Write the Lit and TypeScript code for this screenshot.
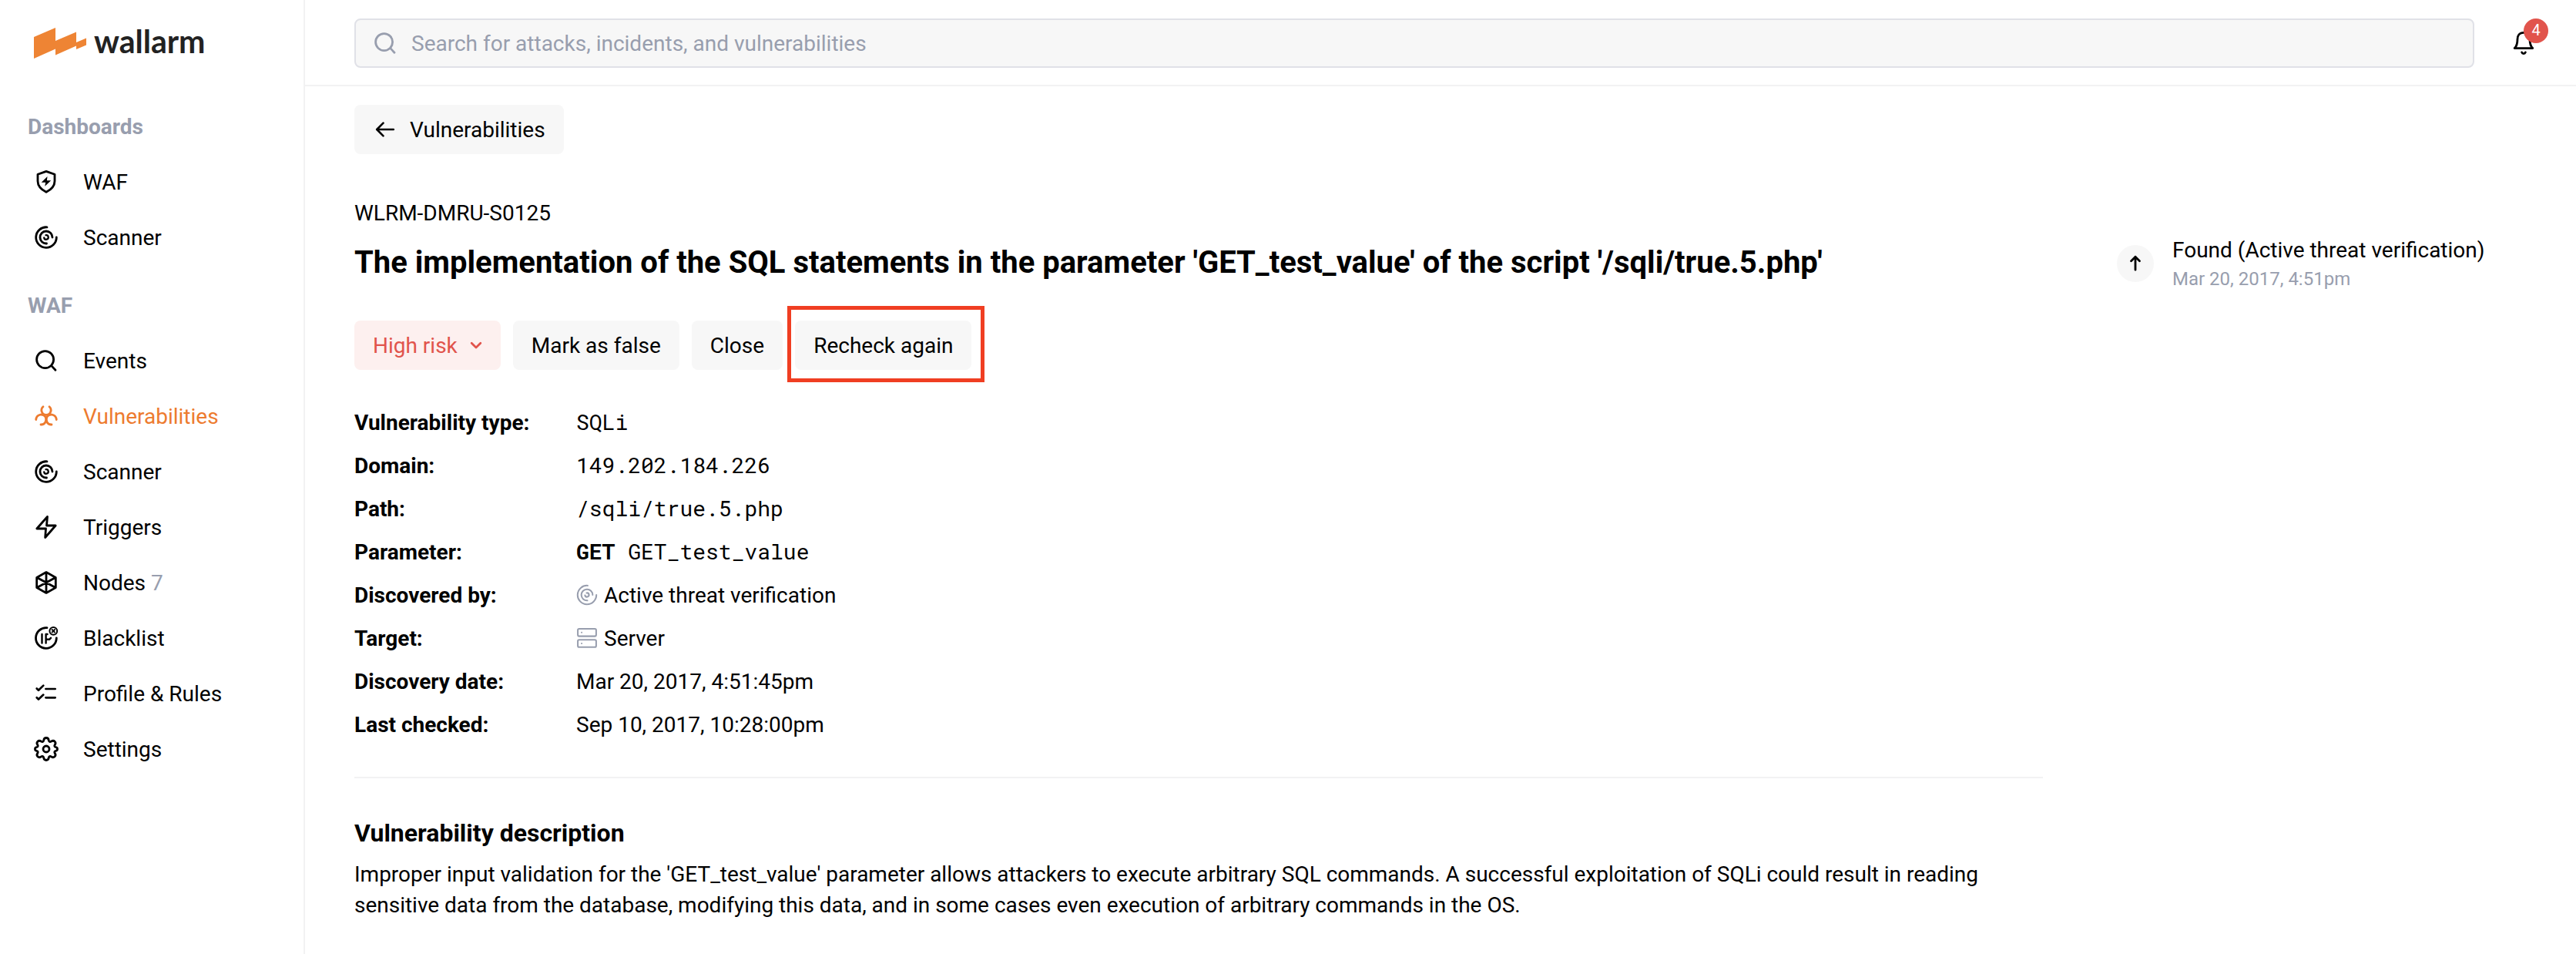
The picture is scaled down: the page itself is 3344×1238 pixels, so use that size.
import { LitElement, html, svg, css } from "lit";
import { customElement, property } from "lit/decorators.js";

const icons: Record<string, any> = {
  shield: svg`<path d="M24 10.400 35 14.200V23C35 29.800 30.500 34 24 37.300 17.500 34 13 29.800 13 23V14.200Z"/><path d="M25.500 17 17.700 24.800H23.200L22.200 29.800 30.200 22.200H24.900Z" fill="currentColor" stroke="none"/>`,
  scanner: svg`<path d="M25 10.800A13.300 13.300 0 1 0 37.300 24"/><path d="M24.500 32A8 8 0 1 1 32 24"/><path d="M23.500 21.200A2.800 2.800 0 1 1 21.200 24.500" stroke-width="2.300"/>`,
  search: svg`<circle cx="22.600" cy="22.600" r="11"/><path d="M31 30.900 36 36.200"/>`,
  bio: svg`<path d="M20 11.800C16 15.300 18 22.300 24 22.300S32 15.300 28 11.800"/><path d="M10.700 28.500C11.400 21.500 19.500 20 23 25 25.500 29.500 22.500 35.300 17 35"/><path d="M37.300 28.500C36.600 21.500 28.500 20 25 25 22.500 29.500 25.500 35.300 31 35"/>`,
  bolt: svg`<path d="M25.500 10.500 11.800 26H23.500L22.700 37.500 36.200 22H24.500Z"/>`,
  nodes: svg`<path d="M24 10.600 36.300 17.400V30.600L24 37.400 11.700 30.600V17.400ZM24 10.800V37.200M12 17.400 36 30.600M36 17.400 12 30.600"/>`,
  settings: svg`<circle cx="24" cy="24" r="4"/><path d="M24 9.500c2.200 0 3 1.200 3.300 3.200.3 1.700 1.700 2.300 3.200 1.400 1.700-1.200 3.200-1.300 4.600.1s1.200 2.900.1 4.400c-.9 1.400-.4 2.800 1.300 3.100 2 .3 2 1.200 2 2.300s0 2-2 2.300c-1.700.3-2.200 1.700-1.300 3.100 1.100 1.500 1.300 3-.1 4.400s-2.900 1.300-4.600.1c-1.500-.9-2.900-.3-3.200 1.400-.3 2-1.100 3.200-3.300 3.200s-3-1.200-3.300-3.200c-.3-1.700-1.700-2.300-3.200-1.400-1.700 1.200-3.200 1.300-4.600-.1s-1.200-2.900-.1-4.400c.9-1.400.4-2.800-1.300-3.100-2-.3-2-1.200-2-2.300s0-2 2-2.300c1.700-.3 2.200-1.700 1.300-3.100-1.100-1.500-1.300-3 .1-4.400s2.900-1.300 4.600-.1c1.500.9 2.900.3 3.200-1.400.3-2 1.100-3.200 3.300-3.200Z"/>`,
  blacklist: svg`<path d="M25 10.600A13.400 13.400 0 1 0 37.300 24"/><path d="M18.500 19V30.600M23.600 30.600V19H25.500M23.600 25.800H28L30 23.800" stroke-width="2.400"/><circle cx="33.300" cy="14.800" r="4.900" stroke-width="2"/><path d="M31.500 13 35.100 16.600M35.100 13 31.500 16.600" stroke-width="1.800"/>`,
  rules: svg`<path d="M11.700 17.500 14 19.800 20.300 13.600M11.700 29.300 14 31.600 20.300 25.600M23.400 18H35.700M23.400 29.300H35.700" stroke-width="2.700"/>`,
  server: svg`<rect x="11" y="11" width="26" height="10.400" rx="2"/><rect x="11" y="26.400" width="26" height="10.400" rx="2"/><path d="M16.400 16.200h.1M16.400 31.600h.1"/>`,
  back: svg`<path d="M34.800 24H13.300M21.500 15.700 13.200 24 21.500 32.300" stroke-width="2.600"/>`,
  up: svg`<path d="M24 32.200V15.200M18.500 20.700 24 15.200 29.500 20.700"/>`,
  chevron: svg`<path d="M18.200 21.300 24 26.900 29.800 21.300"/>`,
  bell: svg`<path d="M24 10.400C18.500 10.400 16 14.500 16 19 16 24.500 14.700 28.300 12.200 30.600H35.800C33.300 28.300 32 24.500 32 19 32 14.500 29.500 10.400 24 10.400Z"/><path d="M21.600 35.900C22.400 38.200 25.600 38.200 26.400 35.900"/>`,
};

@customElement("ui-icon")
class UiIcon extends LitElement {
  static styles = css`
    :host { display: block; flex: none; width: 48px; height: 48px; }
    svg { display: block; width: 100%; height: 100%; fill: none; stroke: currentColor; stroke-linecap: round; stroke-linejoin: round; }
  `;
  @property() name = "";
  @property({ type: Number }) weight = 2.8;
  render() {
    return html`<svg viewBox="0 0 48 48" stroke-width=${this.weight}>${icons[this.name]}</svg>`;
  }
}

const groups = [
  { title: "Dashboards", items: [["shield", "WAF"], ["scanner", "Scanner"]] },
  {
    title: "WAF",
    items: [
      ["search", "Events"], ["bio", "Vulnerabilities"], ["scanner", "Scanner"], ["bolt", "Triggers"],
      ["nodes", "Nodes", "7"], ["blacklist", "Blacklist"], ["rules", "Profile & Rules"], ["settings", "Settings"],
    ],
  },
];

const details = [
  { label: "Vulnerability type:", value: "SQLi", mono: true },
  { label: "Domain:", value: "149.202.184.226", mono: true },
  { label: "Path:", value: "/sqli/true.5.php", mono: true },
  { label: "Parameter:", value: "GET_test_value", mono: true, method: "GET" },
  { label: "Discovered by:", value: "Active threat verification", icon: "scanner" },
  { label: "Target:", value: "Server", icon: "server" },
  { label: "Discovery date:", value: "Mar 20, 2017, 4:51:45pm" },
  { label: "Last checked:", value: "Sep 10, 2017, 10:28:00pm" },
];

@customElement("app-root")
class AppRoot extends LitElement {
  static styles = css`
    :host { display: flex; height: 1238px; overflow: hidden; background: #fff; color: #000; font: 28px/40px Roboto, "Liberation Sans", sans-serif; }
    * { box-sizing: border-box; }
    .sidebar { width: 396px; flex: none; border-right: 2px solid #f2f2f3; }
    .logo { display: block; width: 240px; height: 60px; margin: 26px 0 0 40px; overflow: visible; }
    .wordmark { font: 700 42px/52px Lato, sans-serif; fill: #222; }
    .group { padding-left: 36px; }
    .group-title { height: 40px; padding-top: 1px; font-weight: 700; color: #989eae; }
    .group.first { padding-top: 58px; }
    .group.second { padding-top: 32px; }
    .nav { margin-top: 16px; }
    .item { display: flex; align-items: center; height: 72px; gap: 24px; }
    .text { margin-top: 2px; }
    .active { color: #ed7b2f; }
    .count { color: #989eae; }
    .main { flex: 1; min-width: 0; }
    .top { display: flex; align-items: center; height: 112px; padding: 2px 0 0 64px; border-bottom: 2px solid #f2f2f3; }
    .search { display: flex; align-items: center; width: 2752px; height: 64px; padding-left: 14px; gap: 10px; border: 2px solid #e0e1e7; border-radius: 8px; background: #f7f7f7; color: #989eae; }
    .bell { position: relative; margin-left: 40px; }
    .badge { position: absolute; left: 24px; top: -8px; width: 32px; height: 32px; border-radius: 50%; background: #e1544c; color: #fff; font-size: 20px; line-height: 30px; text-align: center; }
    .content { display: flex; padding: 24px 0 0 64px; }
    .detail { width: 2192px; flex: none; }
    .btn { display: flex; width: fit-content; align-items: center; height: 64px; padding: 0 24px; border-radius: 8px; background: #f7f7f7; white-space: nowrap; }
    .back { padding: 0 24px 0 16px; gap: 8px; }
    .code { margin-top: 57px; }
    h1 { margin: 16px 0 0; font-size: 40px; line-height: 56px; font-weight: 700; white-space: nowrap; }
    .actions { display: flex; gap: 16px; margin-top: 47px; }
    .risk { background: #fdf0ef; color: #e1544c; padding-right: 8px; }
    .marked { position: relative; }
    .frame { position: absolute; left: -10px; top: -19px; width: 256px; height: 99px; border: 5px solid #f03e22; }
    .facts { display: grid; grid-template-columns: 288px 1fr; grid-auto-rows: 56px; align-items: center; margin: 40px 0 0; }
    dt { font-weight: 700; padding-top: 2px; }
    dd { margin: 0; display: flex; align-items: center; }
    .mono { font-family: "Roboto Mono", "DejaVu Sans Mono", monospace; white-space: pre; }
    .method { font-weight: 700; }
    .small { width: 44px; height: 44px; margin-left: -8px; color: #989eae; }
    .rule { height: 2px; margin: 40px 0 0; background: #f2f2f3; }
    h2 { margin: 47px 0 0; font-size: 32px; line-height: 48px; font-weight: 700; }
    p { margin: 10px 0 0; line-height: 40px; white-space: nowrap; letter-spacing: -0.01px; }
    .history { display: flex; margin: 169px 0 0 96px; gap: 24px; }
    .dot { display: flex; align-items: center; justify-content: center; width: 48px; height: 48px; margin-top: 13px; border-radius: 50%; background: #f7f7f7; }
    .when { margin-top: 1px; font-size: 24px; line-height: 32px; color: #989eae; }
    .event { white-space: nowrap; }
  `;
  render() {
    return html`
      <nav class="sidebar">
        <svg class="logo" viewBox="0 -4 240 60">
          <path fill="#ee8434" d="M4 18 32 6V23L59 11.500V25L72 19.500V28.500L59 34V29.500L32 41.500V33.500L4 46Z" />
          <text class="wordmark" x="82" y="39.200" textLength="144.500" lengthAdjust="spacingAndGlyphs">wallarm</text>
        </svg>
        ${groups.map((g, i) => html`
          <div class="group ${i ? "second" : "first"}">
            <div class="group-title">${g.title}</div>
            <div class="nav">
              ${g.items.map(([icon, label, count]) => html`
                <div class="item ${icon === "bio" ? "active" : ""}">
                  <ui-icon name=${icon}></ui-icon>
                  <span class="text">${label}${count ? html` <span class="count">${count}</span>` : ""}</span>
                </div>`)}
            </div>
          </div>`)}
      </nav>
      <div class="main">
        <header class="top">
          <div class="search"><ui-icon name="search"></ui-icon><span class="text">Search for attacks, incidents, and vulnerabilities</span></div>
          <div class="bell"><ui-icon name="bell"></ui-icon><span class="badge">4</span></div>
        </header>
        <div class="content">
          <section class="detail">
            <div class="btn back"><ui-icon name="back"></ui-icon><span class="text">Vulnerabilities</span></div>
            <div class="code">WLRM-DMRU-S0125</div>
            <h1>The implementation of the SQL statements in the parameter 'GET_test_value' of the script '/sqli/true.5.php'</h1>
            <div class="actions">
              <div class="btn risk"><span class="text">High risk</span><ui-icon name="chevron"></ui-icon></div>
              <div class="btn"><span class="text">Mark as false</span></div>
              <div class="btn"><span class="text">Close</span></div>
              <div class="btn marked"><span class="text">Recheck again</span><span class="frame"></span></div>
            </div>
            <dl class="facts">
              ${details.map((d) => html`
                <dt>${d.label}</dt>
                <dd>
                  ${d.icon ? html`<ui-icon class="small" name=${d.icon} weight="2.2"></ui-icon>` : ""}
                  ${d.method ? html`<span class="mono method">${d.method + " "}</span>` : ""}
                  <span class=${d.mono ? "mono" : "text"}>${d.value}</span>
                </dd>`)}
            </dl>
            <div class="rule"></div>
            <h2>Vulnerability description</h2>
            <p>Improper input validation for the 'GET_test_value' parameter allows attackers to execute arbitrary SQL commands. A successful exploitation of SQLi could result in reading<br />sensitive data from the database, modifying this data, and in some cases even execution of arbitrary commands in the OS.</p>
          </section>
          <aside class="history">
            <div class="dot"><ui-icon name="up"></ui-icon></div>
            <div class="event">
              <div>Found (Active threat verification)</div>
              <div class="when">Mar 20, 2017, 4:51pm</div>
            </div>
          </aside>
        </div>
      </div>`;
  }
}
